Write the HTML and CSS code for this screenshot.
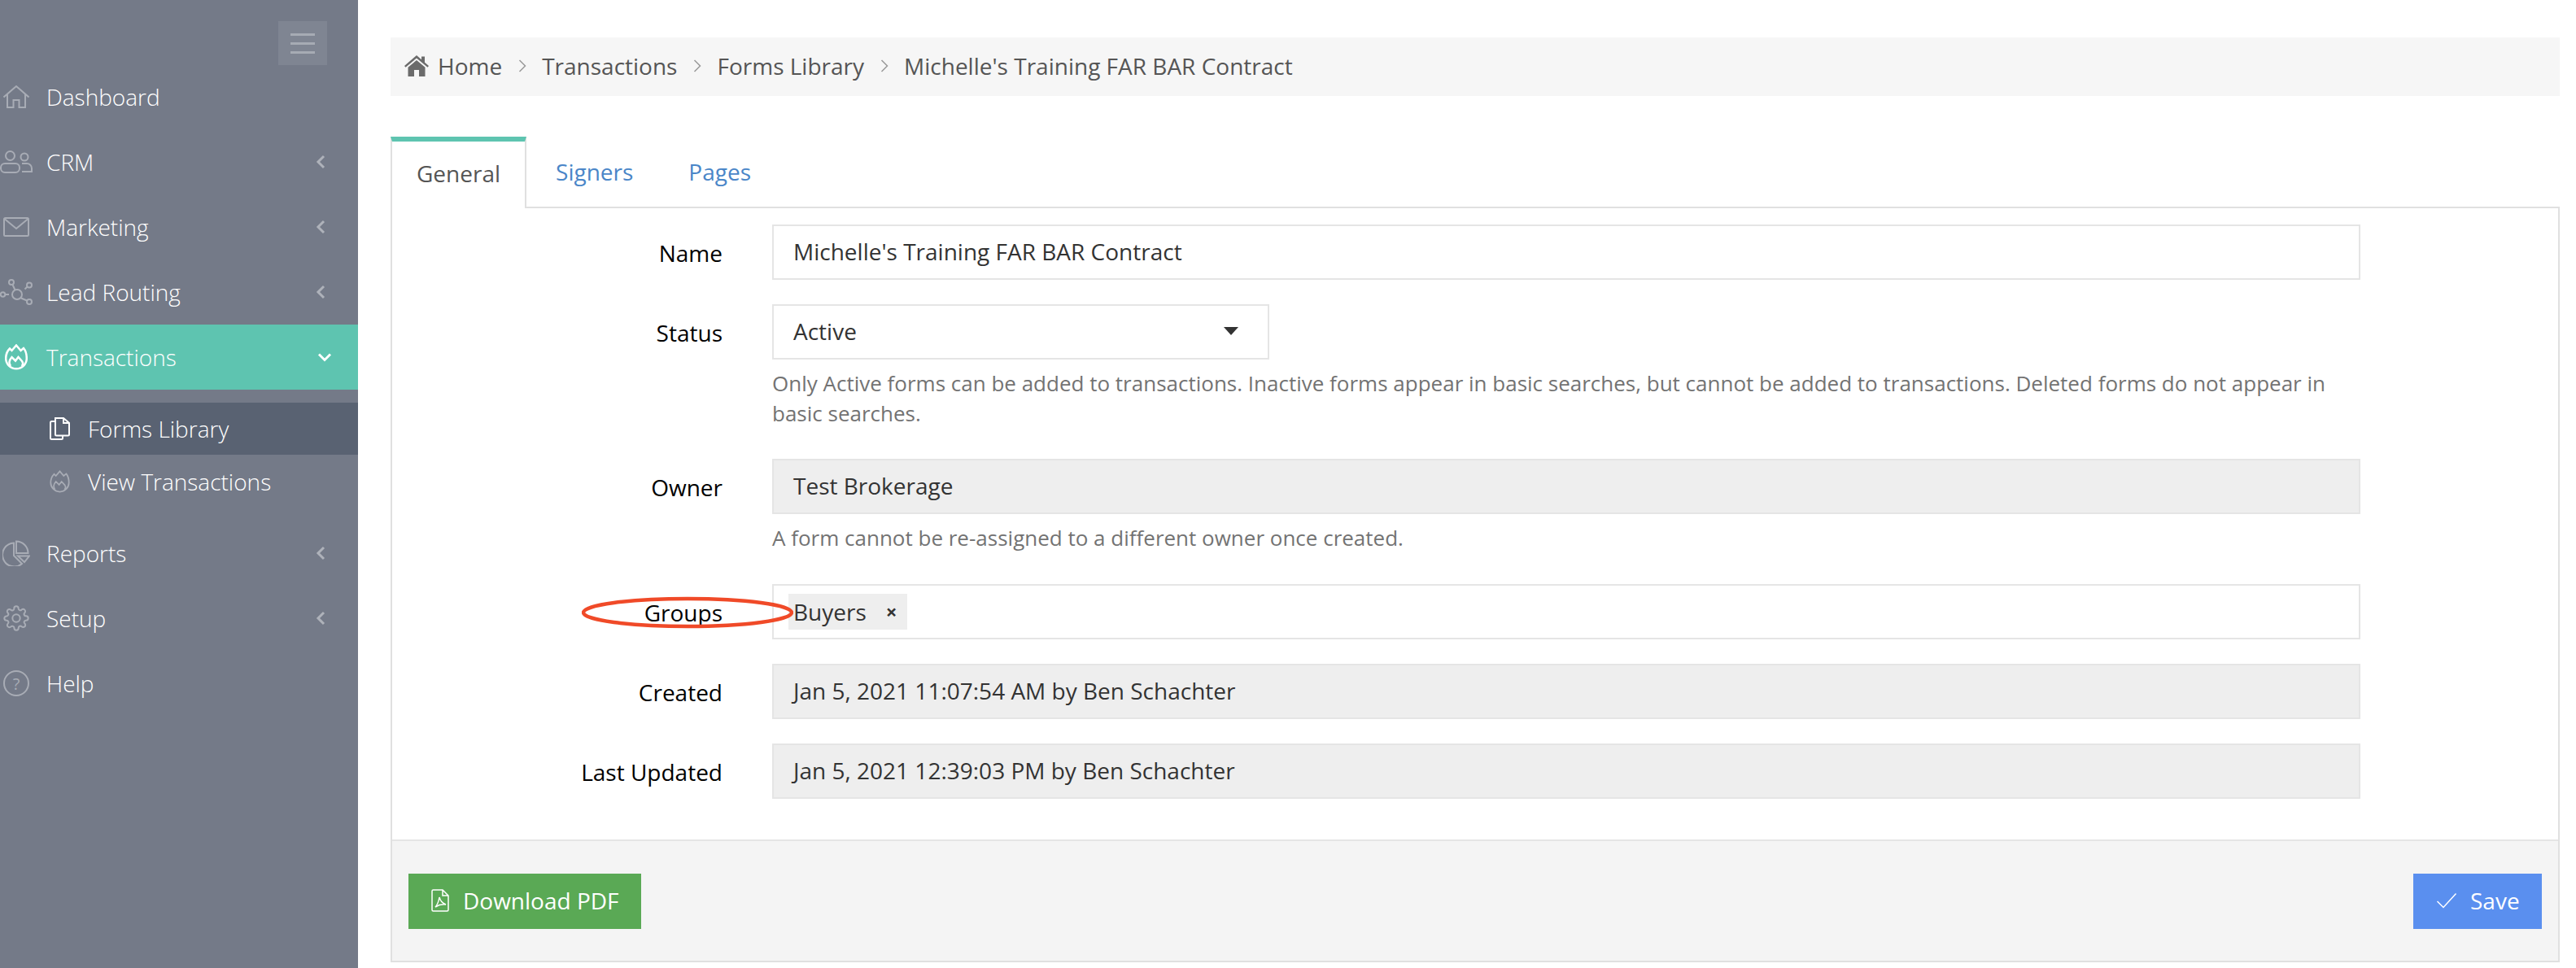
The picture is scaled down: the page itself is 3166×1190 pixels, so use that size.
FILE: index.html
```html
<!DOCTYPE html>
<html lang="en">
<head>
  <meta charset="UTF-8" />
  <title>Michelle's Training FAR BAR Contract</title>
  <link rel="stylesheet" href="styles.css">
</head>
<body>
  <aside class="sidebar">
    <div class="toggle-row">
      <button class="toggle"><span></span><span></span><span></span></button>
    </div>
    <nav class="nav">
      <a class="nav-item">
        <span class="nav-icon"><svg width="32" height="28" viewBox="0 0 32 28"><path d="M0.5 14.5 16 1l15.500 13.500M5 10.500V27h7.500v-9h7v9H27V10.500"/></svg></span>
        <span class="nav-label">Dashboard</span>
      </a>
      <a class="nav-item">
        <span class="nav-icon"><svg width="40" height="28" viewBox="0 0 40 28"><circle cx="12.500" cy="6.500" r="5.500"/><rect x="1" y="16" width="23" height="11" rx="5"/><circle cx="30" cy="8" r="4.500"/><path d="M27 16h6a6 6 0 0 1 6 6v4H27"/></svg></span>
        <span class="nav-label">CRM</span>
        <svg class="chevron" width="12" height="18" viewBox="0 0 12 18"><path d="M10 2 3 9l7 7"/></svg>
      </a>
      <a class="nav-item">
        <span class="nav-icon"><svg width="32" height="24" viewBox="0 0 32 24"><rect x="1" y="1" width="30" height="22" rx="1.500"/><path d="M1.500 2 16 14 30.500 2"/></svg></span>
        <span class="nav-label">Marketing</span>
        <svg class="chevron" width="12" height="18" viewBox="0 0 12 18"><path d="M10 2 3 9l7 7"/></svg>
      </a>
      <a class="nav-item">
        <span class="nav-icon"><svg width="40" height="32" viewBox="0 0 40 32"><circle cx="21" cy="19" r="6"/><circle cx="14" cy="4" r="3"/><circle cx="36" cy="7.500" r="3"/><circle cx="3.500" cy="19" r="2.800"/><circle cx="36" cy="28" r="3"/><path d="m15.500 7 3 6.500M33.500 9.500l-3 3M7 19h4M26 23.500l7 3"/></svg></span>
        <span class="nav-label">Lead Routing</span>
        <svg class="chevron" width="12" height="18" viewBox="0 0 12 18"><path d="M10 2 3 9l7 7"/></svg>
      </a>
      <a class="nav-item nav-item-active">
        <span class="nav-icon"><svg width="28" height="32" viewBox="0 0 28 32"><path d="M14 1.500 19.500 8 23 5c2.500 3 3.800 7 3.800 12.500a12.800 12.800 0 0 1-25.600 0C1.200 12 3 8.500 6 5.500L8.500 8z"/><path d="M7 27c-2.500-3.500-1.500-7.500 1.500-11l4.500 4.500 3.500-4.500 4.500 5c2 3 1.500 4.500-.5 6"/></svg></span>
        <span class="nav-label">Transactions</span>
        <svg class="chevron chevron-down" width="18" height="12" viewBox="0 0 18 12"><path d="m2 2.500 7 7 7-7"/></svg>
      </a>
      <div class="subnav">
        <a class="sub-item sub-item-active">
          <span class="sub-icon"><svg width="25" height="28" viewBox="0 0 25 28"><path d="M7 1h10l7 6v14a1.500 1.500 0 0 1-1.500 1.500H8.500A1.500 1.500 0 0 1 7 21zM17 1v6h7"/><path d="M7 5H2.500A1.500 1.500 0 0 0 1 6.500v19A1.500 1.500 0 0 0 2.500 27h12a1.500 1.500 0 0 0 1.500-1.500v-3"/></svg></span>
          <span>Forms Library</span>
        </a>
        <a class="sub-item">
          <span class="sub-icon"><svg width="25" height="28" viewBox="0 0 28 32"><path d="M14 1.500 19.500 8 23 5c2.500 3 3.800 7 3.800 12.500a12.800 12.800 0 0 1-25.600 0C1.200 12 3 8.500 6 5.500L8.500 8z"/><path d="M7 27c-2.500-3.500-1.500-7.500 1.500-11l4.500 4.500 3.500-4.500 4.500 5c2 3 1.500 4.500-.5 6"/></svg></span>
          <span>View Transactions</span>
        </a>
      </div>
      <a class="nav-item">
        <span class="nav-icon"><svg width="34" height="32" viewBox="0 0 34 32"><path d="M14 3.500A14.500 14.500 0 1 0 24 29L14 19z"/><path d="M17 1.500A14.500 14.500 0 0 1 31.500 16H17z"/><path d="M19 19.500h14L27 27z"/></svg></span>
        <span class="nav-label">Reports</span>
        <svg class="chevron" width="12" height="18" viewBox="0 0 12 18"><path d="M10 2 3 9l7 7"/></svg>
      </a>
      <a class="nav-item">
        <span class="nav-icon"><svg width="32" height="32" viewBox="0 0 24 24" class="thin"><circle cx="12" cy="12" r="3.500"/><path d="M19.400 15a1.650 1.650 0 0 0 .33 1.820l.06.06a2 2 0 0 1 0 2.830 2 2 0 0 1-2.830 0l-.06-.06a1.650 1.650 0 0 0-1.820-.33 1.650 1.650 0 0 0-1 1.510V21a2 2 0 0 1-2 2 2 2 0 0 1-2-2v-.09A1.650 1.650 0 0 0 9 19.400a1.650 1.650 0 0 0-1.820.33l-.06.06a2 2 0 0 1-2.830 0 2 2 0 0 1 0-2.830l.06-.06a1.650 1.650 0 0 0 .33-1.820 1.650 1.650 0 0 0-1.510-1H3a2 2 0 0 1-2-2 2 2 0 0 1 2-2h.09A1.650 1.650 0 0 0 4.600 9a1.650 1.650 0 0 0-.33-1.820l-.06-.06a2 2 0 0 1 0-2.830 2 2 0 0 1 2.830 0l.06.06a1.650 1.650 0 0 0 1.820.33H9a1.650 1.650 0 0 0 1-1.510V3a2 2 0 0 1 2-2 2 2 0 0 1 2 2v.09a1.650 1.650 0 0 0 1 1.510 1.650 1.650 0 0 0 1.820-.33l.06-.06a2 2 0 0 1 2.830 0 2 2 0 0 1 0 2.830l-.06.06a1.650 1.650 0 0 0-.33 1.820V9a1.650 1.650 0 0 0 1.510 1H21a2 2 0 0 1 2 2 2 2 0 0 1-2 2h-.09a1.650 1.650 0 0 0-1.510 1z"/></svg></span>
        <span class="nav-label">Setup</span>
        <svg class="chevron" width="12" height="18" viewBox="0 0 12 18"><path d="M10 2 3 9l7 7"/></svg>
      </a>
      <a class="nav-item">
        <span class="nav-icon"><span class="help-icon">?</span></span>
        <span class="nav-label">Help</span>
      </a>
    </nav>
  </aside>

  <main class="main">
    <ol class="breadcrumb">
      <li class="crumb"><svg class="home-icon" width="30" height="26" viewBox="0 0 30 26"><path d="M15 0 0 13l1.500 1.800L15 3.500l13.500 11.300L30 13l-5-4.300V1.500h-4v3.700zM15 6 4.500 14.800V26H12v-8h6v8h7.500V14.800z"/></svg>Home</li>
      <li class="crumb-sep"><svg width="10" height="18" viewBox="0 0 10 18"><path d="m1.500 2 7 7-7 7"/></svg></li>
      <li class="crumb">Transactions</li>
      <li class="crumb-sep"><svg width="10" height="18" viewBox="0 0 10 18"><path d="m1.500 2 7 7-7 7"/></svg></li>
      <li class="crumb">Forms Library</li>
      <li class="crumb-sep"><svg width="10" height="18" viewBox="0 0 10 18"><path d="m1.500 2 7 7-7 7"/></svg></li>
      <li class="crumb">Michelle's Training FAR BAR Contract</li>
    </ol>

    <div class="tabs">
      <a class="tab tab-active">General</a>
      <a class="tab">Signers</a>
      <a class="tab">Pages</a>
    </div>

    <section class="panel">
      <div class="form">
        <div class="row">
          <label class="row-label">Name</label>
          <div class="row-field"><div class="input">Michelle's Training FAR BAR Contract</div></div>
        </div>
        <div class="row">
          <label class="row-label">Status</label>
          <div class="row-field">
            <div class="input select">Active<span class="caret"></span></div>
            <p class="help">Only Active forms can be added to transactions. Inactive forms appear in basic searches, but cannot be added to transactions. Deleted forms do not appear in basic searches.</p>
          </div>
        </div>
        <div class="row">
          <label class="row-label">Owner</label>
          <div class="row-field">
            <div class="input input-readonly">Test Brokerage</div>
            <p class="help">A form cannot be re-assigned to a different owner once created.</p>
          </div>
        </div>
        <div class="row">
          <label class="row-label row-label-marked">Groups
            <svg class="marker" width="260" height="42" viewBox="0 0 260 42"><ellipse cx="130" cy="21" rx="128" ry="17"/></svg>
          </label>
          <div class="row-field">
            <div class="input input-tags"><span class="tag">Buyers<span class="tag-x">×</span></span></div>
          </div>
        </div>
        <div class="row">
          <label class="row-label">Created</label>
          <div class="row-field"><div class="input input-readonly">Jan 5, 2021 11:07:54 AM by Ben Schachter</div></div>
        </div>
        <div class="row">
          <label class="row-label">Last Updated</label>
          <div class="row-field"><div class="input input-readonly">Jan 5, 2021 12:39:03 PM by Ben Schachter</div></div>
        </div>
      </div>
      <div class="panel-footer">
        <button class="btn btn-green">
          <svg width="22" height="28" viewBox="0 0 22 28"><path d="M2.500 1H14l7 7v17.500a1.500 1.500 0 0 1-1.500 1.500h-17A1.500 1.500 0 0 1 1 25.500v-23A1.500 1.500 0 0 1 2.500 1zM14 1v7h7"/><path d="M10 10c1 4 3 7 8 9-4-.5-9 .5-13 3 2-2 4-6 5-12z"/></svg>
          Download PDF
        </button>
        <button class="btn btn-blue">
          <svg width="26" height="20" viewBox="0 0 26 20"><path d="m1.500 11 7.500 7.500L24.500 1.500"/></svg>
          Save
        </button>
      </div>
    </section>
  </main>
</body>
</html>
```

FILE: styles.css
```css
* {
  box-sizing: border-box;
}

html, body {
  margin: 0;
  height: 100%;
}

body {
  display: flex;
  overflow: hidden;
  background-color: #fff;
  color: #333;
  font-family: "Open Sans", Arial, sans-serif;
  font-size: 28px;
}

/* sidebar */
.sidebar {
  width: 440px;
  flex-shrink: 0;
  background-color: #747a88;
  color: #fff;
  font-weight: 300;
}

.toggle-row {
  display: flex;
  justify-content: flex-end;
  padding: 26px 38px 0 0;
  height: 79px;
}

.toggle {
  display: flex;
  flex-direction: column;
  justify-content: center;
  align-items: center;
  gap: 8px;
  width: 60px;
  height: 54px;
  padding: 0;
  border: none;
  background-color: #7f8592;
}

.toggle span {
  width: 30px;
  height: 3px;
  background-color: #a6abb4;
}

.nav-item {
  display: flex;
  align-items: center;
  height: 80px;
  gap: 17px;
}

.nav-item svg, .sub-item svg {
  fill: none;
  stroke: #a8acb5;
  stroke-width: 2;
}

.nav-icon {
  display: flex;
  justify-content: center;
  width: 40px;
}

.nav-icon svg.thin {
  stroke-width: 1.500;
}

.nav-label {
  flex: 1;
}

.chevron {
  margin-right: 40px;
}

.nav-item .chevron {
  stroke: #aeb2ba;
  stroke-width: 3;
}

.nav-item-active {
  background-color: #5ec4b0;
}

.nav-item-active .nav-icon svg {
  stroke: #fff;
  stroke-width: 2.500;
}

.nav-item .chevron-down {
  stroke: #fff;
  margin-right: 32px;
}

.subnav {
  padding: 16px 0 15px;
}

.sub-item {
  display: flex;
  align-items: center;
  height: 66px;
  gap: 22px;
  padding-left: 61px;
}

.sub-item-active {
  height: 64px;
  background-color: #596272;
}

.sub-item-active .sub-icon svg {
  stroke: #fff;
}

.sub-icon {
  display: flex;
  width: 25px;
}

.help-icon {
  display: flex;
  justify-content: center;
  align-items: center;
  width: 32px;
  height: 32px;
  border: 2px solid #a8acb5;
  border-radius: 50%;
  color: #a8acb5;
  font-size: 20px;
  font-weight: 400;
}

/* main column */
.main {
  flex: 1;
  min-width: 0;
  padding: 46px 20px 0 40px;
}

.breadcrumb {
  display: flex;
  align-items: center;
  height: 72px;
  margin: 0;
  padding: 0 0 2px 17px;
  list-style: none;
  background-color: #f6f6f6;
  color: #555;
}

.crumb {
  display: flex;
  align-items: center;
}

.home-icon {
  margin-right: 11px;
  fill: #6b6b6b;
}

.crumb-sep {
  display: flex;
  margin: 0 19px 0 20px;
}

.crumb-sep svg {
  fill: none;
  stroke: #999;
  stroke-width: 1.500;
}

.tabs {
  display: flex;
  margin-top: 50px;
  margin-bottom: -2px;
  position: relative;
}

.tab {
  padding: 24px 36px 0 0;
  height: 88px;
  color: #4a86c8;
}

.tab:nth-child(2) {
  padding-left: 36px;
  padding-right: 34px;
}

.tab:nth-child(3) {
  padding-left: 34px;
}

.tab-active {
  padding: 20px 30px 0 30px;
  border: solid #e0e0e0;
  border-width: 0 2px;
  border-top: 6px solid #5ec4b0;
  background-color: #fff;
  color: #555;
}

.panel {
  border: 2px solid #e0e0e0;
  height: 929px;
  display: flex;
  flex-direction: column;
}

.form {
  flex: 1;
  padding-top: 20px;
}

.row {
  display: flex;
  margin-bottom: 30px;
}

.row-label {
  width: 406px;
  flex-shrink: 0;
  padding-top: 16px;
  text-align: right;
  color: #000;
}

.row-label-marked {
  position: relative;
}

.marker {
  position: absolute;
  right: -87px;
  top: 14px;
  fill: none;
  stroke: #f04a28;
  stroke-width: 4.500;
}

.row-field {
  width: 1952px;
  margin-left: 61px;
}

.input {
  display: flex;
  align-items: center;
  height: 68px;
  padding: 0 24px 2px;
  border: 2px solid #e5e5e5;
  background-color: #fff;
}

.input-readonly {
  background-color: #eee;
}

.input-tags {
  padding: 0 24px 0 18px;
}

.tag {
  display: flex;
  align-items: center;
  height: 44px;
  padding: 0 12px 0 6px;
  background-color: #eee;
}

.tag-x {
  margin-left: 24px;
  font-weight: 700;
  font-size: 24px;
}

.select {
  width: 611px;
  justify-content: space-between;
}

.caret {
  margin-right: 12px;
  border-style: solid;
  border-width: 10px 9px 0;
  border-color: #333 transparent transparent;
}

.help {
  margin: 11px 0 8px;
  color: #737373;
  font-size: 26px;
  line-height: 36.500px;
}

.panel-footer {
  display: flex;
  justify-content: space-between;
  align-items: center;
  height: 149px;
  padding: 0 20px;
  border-top: 2px solid #e5e5e5;
  background-color: #f4f4f4;
}

.btn {
  display: flex;
  align-items: center;
  height: 68px;
  padding-bottom: 2px;
  border: none;
  color: #fff;
  font-family: inherit;
  font-size: 28px;
}

.btn svg {
  fill: none;
  stroke: #fff;
  stroke-width: 1.500;
}

.btn-green {
  width: 286px;
  gap: 17px;
  padding-left: 28px;
  background-color: #5aa955;
}

.btn-blue {
  width: 158px;
  gap: 16px;
  padding-left: 28px;
  background-color: #5a8fef;
}
```
